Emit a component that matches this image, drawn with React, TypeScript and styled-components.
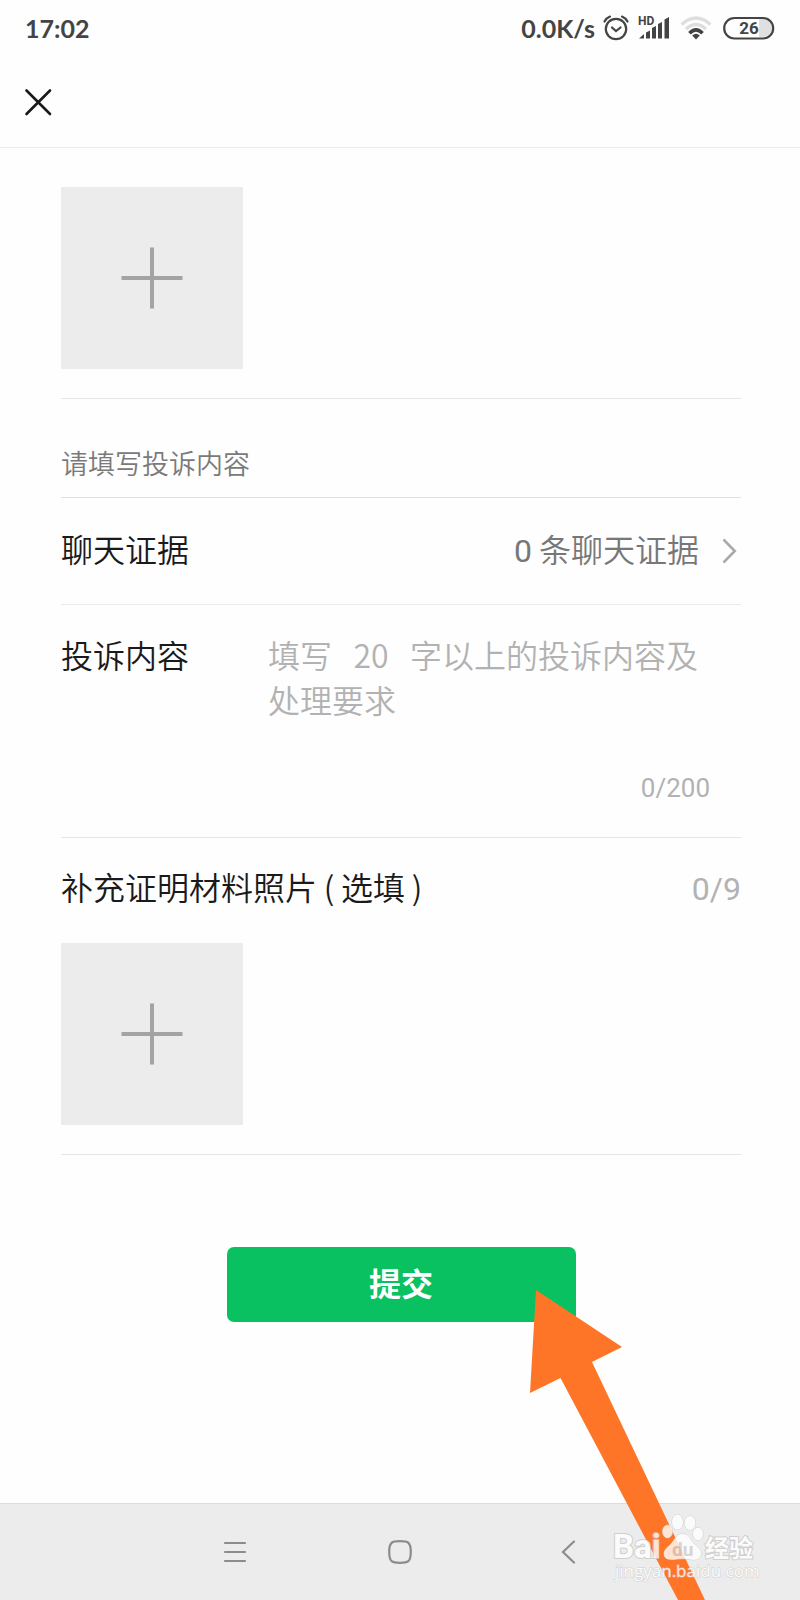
import React from "react";
import styled, { createGlobalStyle } from "styled-components";

const latin = 'Roboto, "Noto Sans CJK SC", sans-serif';

const GlobalStyle = createGlobalStyle`
  * { box-sizing: border-box; }
  body {
    margin: 0;
    background: #fefefe;
    font-family: "Noto Sans CJK SC", sans-serif;
    font-weight: 350;
    color: #1a1a1a;
  }
  button, textarea { font: inherit; color: inherit; }
`;

const Page = styled.div`
  position: relative;
  display: flex;
  flex-direction: column;
  min-height: 100vh;
  overflow: hidden;
`;

const StatusBar = styled.div`
  display: flex;
  align-items: center;
  justify-content: space-between;
  height: 56px;
  padding: 0 25px;
  font-family: Lato, sans-serif;
  font-weight: 700;
  font-size: 25px;
  line-height: 30px;
  color: #444;
`;

const StatusIcons = styled.div`
  display: flex;
  align-items: center;
`;

const StatusIcon = styled.svg<{ $gap: number }>`
  display: block;
  margin-left: ${(p) => p.$gap}px;
`;

const Header = styled.header`
  display: flex;
  align-items: center;
  height: 92px;
  padding: 0 16px;
  border-bottom: 1px solid #ebebeb;
`;

const IconButton = styled.button`
  display: flex;
  align-items: center;
  justify-content: center;
  width: 44px;
  height: 44px;
  padding: 0;
  border: 0;
  background: none;
`;

const Form = styled.form`
  flex: 1;
  padding: 0 59px 0 61px;
`;

const Section = styled.section<{ $top: number }>`
  padding: ${(p) => p.$top}px 0 29px;
  border-bottom: 1px solid #e5e5e5;
`;

const Upload = styled.button`
  display: flex;
  align-items: center;
  justify-content: center;
  width: 182px;
  height: 182px;
  padding: 0;
  border: 0;
  background: #ececec;
`;

const Caption = styled.h2`
  margin: 0;
  padding: 46px 0 16px;
  border-bottom: 1px solid #e0e0e0;
  font-size: 27px;
  font-weight: 350;
  line-height: 36px;
  color: #7a7a7a;
`;

const LinkRow = styled.button`
  display: flex;
  align-items: center;
  width: 100%;
  height: 107px;
  padding: 0 4px 0 0;
  border: 0;
  border-bottom: 1px solid #ebebeb;
  background: none;
  font-size: 32px;
  line-height: 45px;
  text-align: left;
`;

const RowText = styled.span`
  padding-bottom: 6px;
`;

const RowValue = styled(RowText)`
  margin: 0 23px 0 auto;
  color: #777;
`;

const Digits = styled.span`
  font-family: ${latin};
  font-weight: 400;
  line-height: 1;
`;

const FieldRow = styled.section`
  display: flex;
  align-items: flex-start;
  padding: 27px 31px 28px 0;
  border-bottom: 1px solid #e5e5e5;
  font-size: 32px;
  line-height: 45px;
`;

const FieldLabel = styled.label`
  flex: 0 0 207px;
`;

const FieldBody = styled.div`
  flex: 1;
  min-width: 0;
`;

const TextArea = styled.textarea`
  display: block;
  width: 100%;
  height: 138px;
  padding: 0;
  border: 0;
  outline: 0;
  resize: none;
  overflow: hidden;
  background: none;
  line-height: 45px;
  &::placeholder { color: #b2b2b2; opacity: 1; }
`;

const Counter = styled.div`
  padding-bottom: 3px;
  font-family: ${latin};
  font-size: 26px;
  line-height: 36px;
  font-weight: 400;
  text-align: right;
  color: #b2b2b2;
`;

const TitleRow = styled.div`
  display: flex;
  align-items: baseline;
  justify-content: space-between;
  height: 45px;
  margin-bottom: 34px;
  font-size: 32px;
  line-height: 45px;
`;

const Paren = styled.span`
  display: inline-block;
  width: 24px;
  text-align: center;
`;

const Total = styled(Digits)`
  color: #b2b2b2;
`;

const Submit = styled.button`
  display: block;
  width: 349px;
  max-width: 100%;
  height: 75px;
  margin: 92px auto 60px;
  padding: 0 0 5px;
  border: 0;
  border-radius: 7px;
  background: #09c160;
  color: #fff;
  font-family: ${latin};
  font-size: 32px;
  font-weight: 700;
`;

const NavBar = styled.nav`
  display: flex;
  align-items: center;
  justify-content: center;
  gap: 121px;
  height: 97px;
  border-top: 1px solid #dcdcdc;
  background: #ececec;
`;

const Arrow = styled.svg`
  position: absolute;
  right: 90px;
  bottom: 0;
  pointer-events: none;
`;

const Watermark = styled.svg`
  position: absolute;
  right: 30px;
  bottom: 0;
  pointer-events: none;
`;

const PlusIcon = () => (
  <svg width="62" height="62" viewBox="0 0 62 62" stroke="#a3a3a3" strokeWidth="4">
    <path d="M31 0.5V61.5M0.5 31H61.5" />
  </svg>
);

function UploadTile({ label }: { label: string }) {
  return (
    <Upload type="button" aria-label={label}>
      <PlusIcon />
    </Upload>
  );
}

function StatusArea() {
  return (
    <StatusBar>
      <span>17:02</span>
      <StatusIcons>
        <span>0.0K/s</span>
        <StatusIcon $gap={7} width="28" height="28" viewBox="0 0 28 28" fill="none" stroke="#444" strokeWidth="2.2" strokeLinecap="round">
          <circle cx="14" cy="15" r="10.200" />
          <path d="M2.500 7.500Q4.500 4 8 2.600M25.500 7.500Q23.500 4 20 2.600" />
          <path d="M10 13.500L14 17L18.500 13.500" />
        </StatusIcon>
        <StatusIcon $gap={8} width="32" height="28" viewBox="0 0 32 28" fill="#444">
          <text x="0" y="11" fontFamily="Roboto, sans-serif" fontSize="12" fontWeight="700">HD</text>
          <path d="M1 24.500L6 20V24.500ZM8 18.500L12 16.500V24.500H8ZM14 14L18 12V24.500H14ZM20 10L24 8V24.500H20ZM26.500 5.500L31 3V24.500H26.500Z" />
        </StatusIcon>
        <StatusIcon $gap={10} width="32" height="26" viewBox="0 0 32 26" fill="none" strokeWidth="3.200">
          <path d="M1.500 9.500Q16 -3.500 30.500 9.500" stroke="#dedede" />
          <path d="M6 14Q16 5 26 14" stroke="#dedede" />
          <path d="M9.500 18.300Q16 11.500 22.500 18.300" stroke="#444" strokeWidth="3.600" />
          <path d="M12.200 20.500Q16 17 19.800 20.500L16 24.500Z" fill="#444" />
        </StatusIcon>
        <StatusIcon $gap={11} width="52" height="24" viewBox="0 0 52 24">
          <path d="M36 3H40A9 9 0 0 1 40 21H36Z" fill="#e0e0e0" />
          <rect x="1.200" y="2" width="49" height="20.500" rx="10.200" fill="none" stroke="#444" strokeWidth="2.200" />
          <text x="26" y="18" textAnchor="middle" fontFamily="Roboto, sans-serif" fontSize="17" fontWeight="700" fill="#444">26</text>
        </StatusIcon>
      </StatusIcons>
    </StatusBar>
  );
}

export default function App() {
  return (
    <Page>
      <GlobalStyle />
      <StatusArea />
      <Header>
        <IconButton type="button" aria-label="关闭">
          <svg width="28" height="28" viewBox="0 0 28 28" stroke="#1a1a1a" strokeWidth="2.600" strokeLinecap="round">
            <path d="M2.500 2.500L26 26M26 2.500L2.500 26" />
          </svg>
        </IconButton>
      </Header>

      <Form onSubmit={(e) => e.preventDefault()}>
        <Section $top={39}>
          <UploadTile label="添加图片" />
        </Section>

        <Caption>请填写投诉内容</Caption>

        <LinkRow type="button">
          <RowText>聊天证据</RowText>
          <RowValue>
            <Digits>0</Digits> 条聊天证据
          </RowValue>
          <svg width="15" height="26" viewBox="0 0 15 26" fill="none" stroke="#aaa" strokeWidth="2.600">
            <path d="M1.500 1.500L12.800 13L1.500 24.500" />
          </svg>
        </LinkRow>

        <FieldRow>
          <FieldLabel htmlFor="complaint">投诉内容</FieldLabel>
          <FieldBody>
            <TextArea id="complaint" maxLength={200} placeholder={"填写\u00a0\u00a0 20\u00a0\u00a0 字以上的投诉内容及处理要求"} />
            <Counter>0/200</Counter>
          </FieldBody>
        </FieldRow>

        <Section $top={26}>
          <TitleRow>
            <span>
              补充证明材料照片<Paren>(</Paren>选填<Paren>)</Paren>
            </span>
            <Total>0/9</Total>
          </TitleRow>
          <UploadTile label="添加证明材料照片" />
        </Section>

        <Submit type="submit">提交</Submit>
      </Form>

      <NavBar>
        <IconButton type="button" aria-label="菜单">
          <svg width="24" height="24" viewBox="0 0 24 24" stroke="#8c8c8c" strokeWidth="2.200" strokeLinecap="round">
            <path d="M2 3H22M2 12H22M2 21H22" />
          </svg>
        </IconButton>
        <IconButton type="button" aria-label="主页">
          <svg width="24" height="24" viewBox="0 0 24 24" fill="none" stroke="#8c8c8c" strokeWidth="2.200">
            <path d="M12 1.200C20 1.200 22.800 2 22.800 12S20 22.800 12 22.800 1.200 22 1.200 12 4 1.200 12 1.200Z" />
          </svg>
        </IconButton>
        <IconButton type="button" aria-label="返回">
          <svg width="24" height="24" viewBox="0 0 24 24" fill="none" stroke="#8c8c8c" strokeWidth="2.200" strokeLinecap="round">
            <path d="M21 1.500L10 12L21 22.500" />
          </svg>
        </IconButton>
      </NavBar>

      <Arrow width="180" height="310" viewBox="0 0 180 310" aria-hidden="true">
        <path d="M6 0L92 57L62 72L175 310H148L30.500 88L0 103Z" fill="#ff7527" />
      </Arrow>

      <Watermark width="160" height="90" viewBox="0 0 160 90" fill="#fff" stroke="#c8c8c8" strokeWidth="1" paintOrder="stroke" opacity="0.8">
        <g fontFamily={latin} fontWeight="700">
          <text x="3" y="48" fontSize="33" strokeWidth="2">Bai</text>
          <ellipse cx="57.500" cy="21.500" rx="5" ry="6.500" />
          <ellipse cx="67.500" cy="12" rx="5.500" ry="7.500" />
          <ellipse cx="80" cy="13" rx="5.500" ry="7" />
          <ellipse cx="88" cy="24" rx="5" ry="6.500" />
          <path d="M72 24C66 24 65 30 60 35C55 39 54 41 54 44C54 49 59 50 64 49.500C69 48.500 76 48.500 80 49.500C87 50.500 91 49 91 43C91 38 84 35 81 30C79 26 77 24 72 24Z" />
          <text x="62" y="46" fontSize="19" fill="#d0d0d0" stroke="none">du</text>
          <text x="95" y="47" fontSize="24" strokeWidth="2">经验</text>
        </g>
        <text x="5" y="67" fontFamily="'Open Sans', sans-serif" fontSize="17" fontWeight="400" strokeWidth="1">jingyan.baidu.com</text>
      </Watermark>
    </Page>
  );
}
